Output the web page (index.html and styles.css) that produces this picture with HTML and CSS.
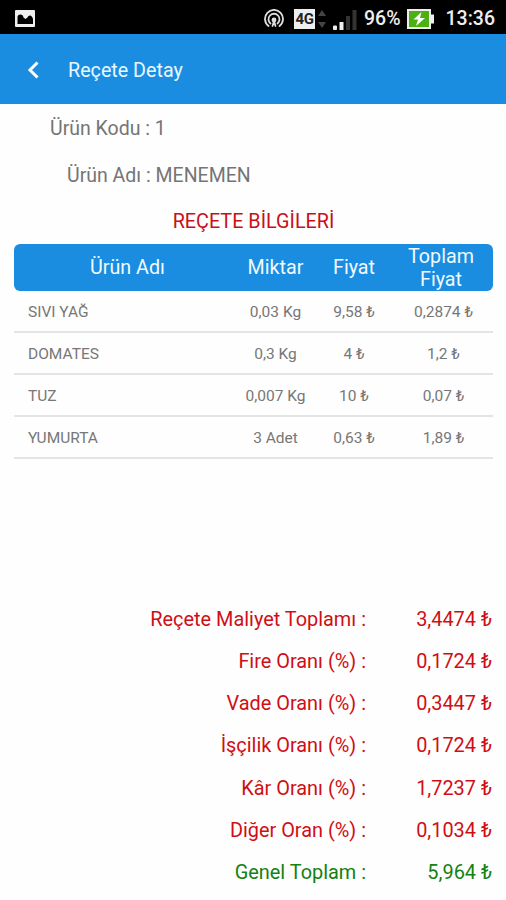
FILE: index.html
```html
<!DOCTYPE html>
<html lang="tr">
<head>
    <meta charset="UTF-8">
    <meta name="viewport" content="width=device-width, initial-scale=1.0">
    <title>Reçete Detay</title>
    <link rel="stylesheet" href="styles.css">
</head>
<body>
    <div class="statusbar">
        <svg class="icon-picture" width="20" height="17" viewBox="0 0 20 17">
            <rect width="20" height="17" rx="1" fill="#f0f0f0"/>
            <path d="M2.500 14V6.500Q3 4.500 5.500 4.500Q8 4.500 8.500 7.500L10.500 9L12.500 7.500Q13 5.500 15 5.500Q17 5.500 18 9V14Z" fill="#000"/>
        </svg>
        <div class="status-icons">
            <svg class="icon-hotspot" width="20" height="19" viewBox="0 0 20 19" fill="none" stroke="#ddd" stroke-width="1.800" stroke-linecap="round">
                <path d="M4.500 17A9 9 0 1 1 15.500 17"/>
                <path d="M6.500 14.500A5.500 5.500 0 1 1 13.500 14.500"/>
                <circle cx="10" cy="11" r="1.500" fill="#ddd"/>
                <path d="M10 12L8.500 17M10 12L11.500 17"/>
            </svg>
            <span class="network">4G</span>
            <svg class="icon-arrows" width="8" height="18" viewBox="0 0 8 18" fill="#444">
                <path d="M4 0L8 6H0Z"/>
                <path d="M4 18L0 12H8Z"/>
            </svg>
            <svg class="icon-signal" width="24" height="20" viewBox="0 0 24 20">
                <rect x="0" y="15.500" width="4" height="4.500" rx="1" fill="#eee"/>
                <rect x="6.500" y="12" width="4" height="8" fill="#eee"/>
                <rect x="13" y="6" width="4" height="14" fill="#333"/>
                <rect x="19.500" y="0" width="4" height="20" fill="#333"/>
            </svg>
            <span class="percent">96%</span>
            <svg class="icon-battery" width="27" height="20" viewBox="0 0 27 20">
                <path d="M0 0H24V5.500H27V14.500H24V20H0Z" fill="#eee"/>
                <rect x="2" y="2" width="20" height="16" fill="#4caf12"/>
                <path d="M14.500 3L6.500 10.500H11L9 17L18 9H13Z" fill="#fff"/>
            </svg>
            <span class="clock">13:36</span>
        </div>
    </div>

    <div class="toolbar">
        <svg width="12" height="18" viewBox="0 0 12 18" fill="none" stroke="#fff" stroke-width="3">
            <path d="M10.500 1.500L3 9L10.500 16.500"/>
        </svg>
        <h1>Reçete Detay</h1>
    </div>

    <div class="content">
        <p class="info code">Ürün Kodu : 1</p>
        <p class="info name">Ürün Adı : MENEMEN</p>
        <h2>REÇETE BİLGİLERİ</h2>

        <div class="table">
            <div class="row head">
                <div>Ürün Adı</div>
                <div>Miktar</div>
                <div>Fiyat</div>
                <div>Toplam Fiyat</div>
            </div>
            <div class="row">
                <div>SIVI YAĞ</div>
                <div>0,03 Kg</div>
                <div>9,58 ₺</div>
                <div>0,2874 ₺</div>
            </div>
            <div class="row">
                <div>DOMATES</div>
                <div>0,3 Kg</div>
                <div>4 ₺</div>
                <div>1,2 ₺</div>
            </div>
            <div class="row">
                <div>TUZ</div>
                <div>0,007 Kg</div>
                <div>10 ₺</div>
                <div>0,07 ₺</div>
            </div>
            <div class="row">
                <div>YUMURTA</div>
                <div>3 Adet</div>
                <div>0,63 ₺</div>
                <div>1,89 ₺</div>
            </div>
        </div>

        <div class="totals">
            <div class="total"><span class="label">Reçete Maliyet Toplamı :</span><span class="value">3,4474 ₺</span></div>
            <div class="total"><span class="label">Fire Oranı (%) :</span><span class="value">0,1724 ₺</span></div>
            <div class="total"><span class="label">Vade Oranı (%) :</span><span class="value">0,3447 ₺</span></div>
            <div class="total"><span class="label">İşçilik Oranı (%) :</span><span class="value">0,1724 ₺</span></div>
            <div class="total"><span class="label">Kâr Oranı (%) :</span><span class="value">1,7237 ₺</span></div>
            <div class="total"><span class="label">Diğer Oran (%) :</span><span class="value">0,1034 ₺</span></div>
            <div class="total grand"><span class="label">Genel Toplam :</span><span class="value">5,964 ₺</span></div>
        </div>
    </div>
</body>
</html>
```
FILE: styles.css
```css
* { box-sizing: border-box; }
body {
    margin: 0;
    height: 900px;
    display: flex;
    flex-direction: column;
    font-family: Roboto, "Noto Sans", sans-serif;
    background: #fefefe;
    overflow: hidden;
}
svg { display: block; flex: none; }
h1, h2, p { margin: 0; font-weight: normal; }

.statusbar {
    height: 34px;
    padding: 3px 11px 0 15px;
    display: flex;
    align-items: center;
    justify-content: space-between;
    background: #000;
    color: #eee;
}
.status-icons {
    display: flex;
    align-items: center;
    white-space: nowrap;
}
.network {
    width: 21px;
    height: 20px;
    margin-left: 10px;
    background: #eee;
    color: #222;
    font-size: 15px;
    font-weight: bold;
    line-height: 21px;
    letter-spacing: -0.5px;
    text-align: center;
}
.icon-arrows { margin-left: 3px; }
.icon-signal { margin: 2px 0 0 7px; }
.percent, .clock {
    font-size: 19.5px;
    font-weight: 500;
    line-height: 24px;
    padding-top: 1px;
}
.percent { margin-left: 7px; }
.icon-battery { margin-left: 6px; }
.clock { margin-left: 12px; }

.toolbar {
    height: 70px;
    padding: 1px 27px 0;
    display: flex;
    align-items: center;
    gap: 29px;
    background: #1b8de0;
    color: #e8f8ff;
}
.toolbar h1 {
    padding-top: 2px;
    font-size: 19.7px;
    line-height: 24px;
}

.content {
    flex: 1;
    padding: 13px 13px 0 14px;
    display: flex;
    flex-direction: column;
}
.info {
    font-size: 19.5px;
    line-height: 24px;
    color: #757575;
}
.code { padding-left: 36px; }
.name { padding-left: 53px; margin-top: 23px; }
h2 {
    margin-top: 22px;
    font-size: 19.8px;
    line-height: 24px;
    text-align: center;
    color: #c81016;
}

.table { margin-top: 9.5px; }
.row {
    display: grid;
    grid-template-columns: 227px 69px 88px 1fr;
    align-items: center;
    height: 42.2px;
    padding-top: 2px;
    border-bottom: 2px solid #e4e4e4;
    font-size: 15.5px;
    color: #777;
    text-align: center;
}
.row div:first-child {
    padding-left: 14px;
    text-align: left;
}
.row div:last-child { padding-right: 4px; }
.row.head {
    height: 47px;
    padding-top: 1px;
    border-bottom: none;
    border-radius: 6px;
    background: #1b8de0;
    color: #f0faff;
    font-size: 19.7px;
    line-height: 23px;
}
.row.head div:first-child {
    padding-left: 0;
    text-align: center;
}
.row.head div:last-child { padding-right: 9px; }

.totals {
    margin-top: auto;
    padding: 0 1px 6.5px 0;
}
.total {
    display: flex;
    height: 42.2px;
    align-items: center;
    font-size: 19.9px;
    color: #d00e14;
}
.label {
    width: 352px;
    text-align: right;
}
.value {
    flex: 1;
    text-align: right;
}
.grand { color: #128212; }
```
